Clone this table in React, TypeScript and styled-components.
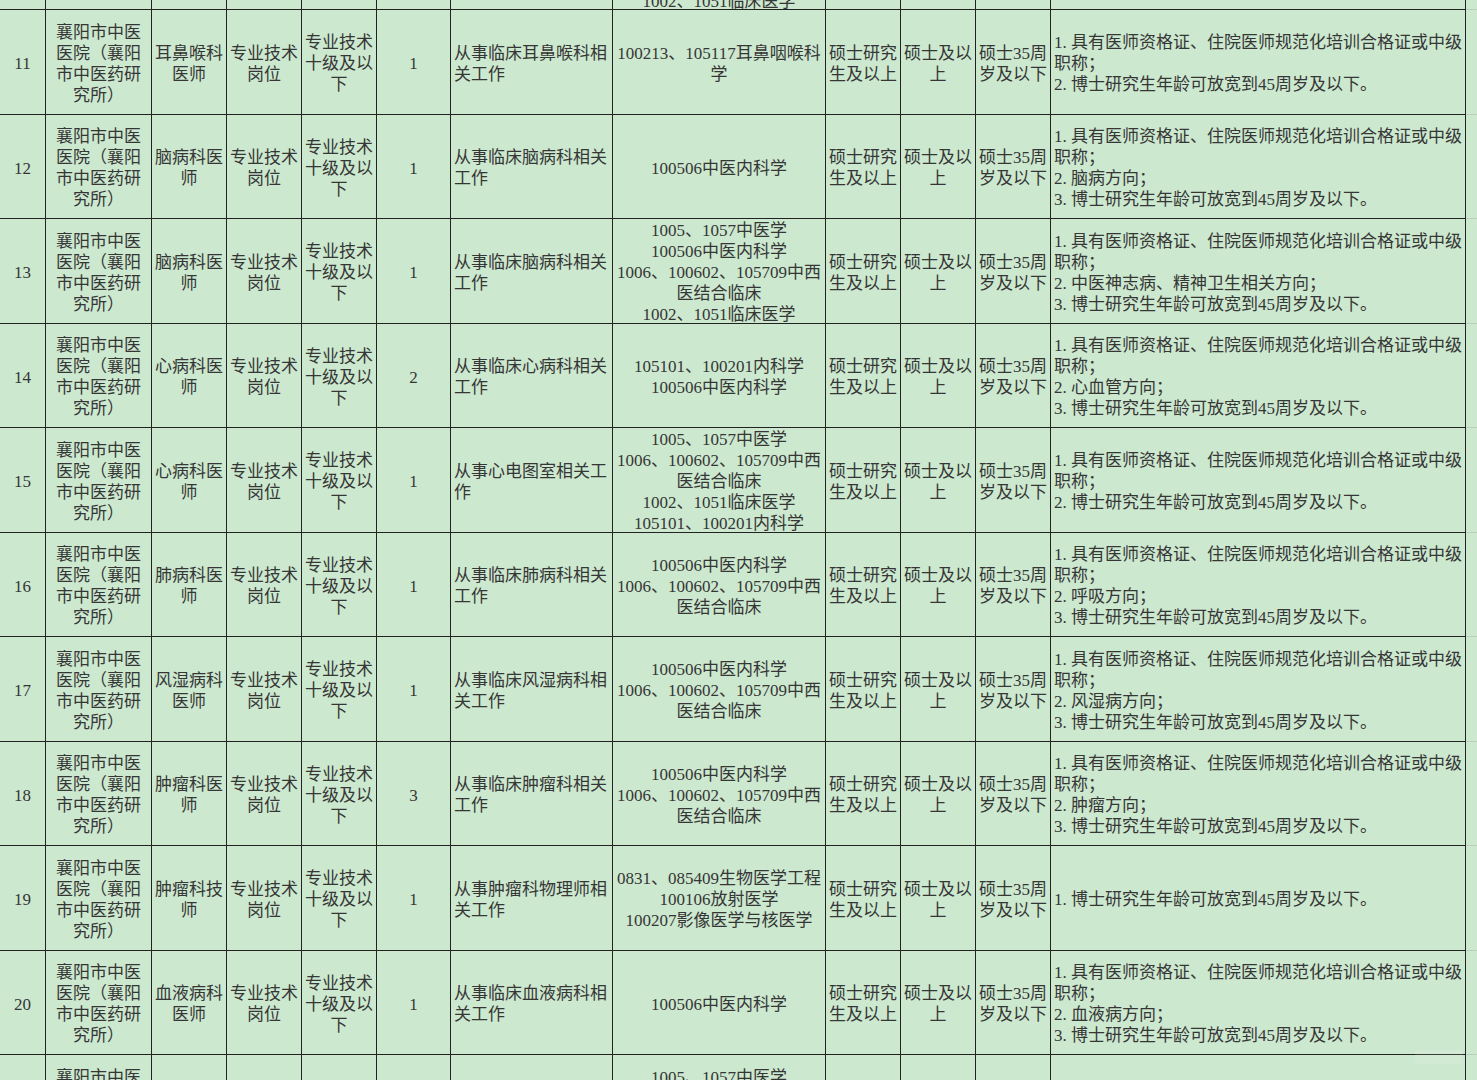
import React from "react";
import styled, { createGlobalStyle } from "styled-components";

const GlobalStyle = createGlobalStyle`
  html, body {
    margin: 0;
    padding: 0;
    background: #cce8cf;
  }
  body {
    font-family: "Liberation Serif", "Noto Sans CJK SC", serif;
    color: #363636;
  }
`;

const COLS = "46px 106px 75px 75px 75px 74px 162px 213px 75px 75px 75px 415px 1fr";

const Viewport = styled.div`
  position: relative;
  width: 1477px;
  height: 1080px;
  overflow: hidden;
  background: #cce8cf;
`;

const Sheet = styled.div`
  margin-top: -94.5px;
  display: flex;
  flex-direction: column;
`;

const Row = styled.div`
  display: grid;
  grid-template-columns: ${COLS};
  height: 104.5px;
`;

const Cell = styled.div<{ $align?: "left" | "center" }>`
  box-sizing: border-box;
  border-right: 1px solid #222;
  border-bottom: 1px solid #222;
  display: flex;
  flex-direction: column;
  justify-content: center;
  align-items: ${(p) => (p.$align === "left" ? "flex-start" : "center")};
  padding: ${(p) => (p.$align === "left" ? "4px 2px 0 3px" : "4px 1px 0")};
  overflow: hidden;
  font-size: 17px;
  line-height: 21px;
  color: #363636;
`;

const Filler = styled.div`
  box-sizing: border-box;
  border-bottom: 1px solid #b9cfbd;
`;

const Line = styled.span`
  display: block;
  white-space: nowrap;
`;

const Watermark = styled.div`
  position: absolute;
  right: 14px;
  bottom: 16px;
  width: 48px;
  height: 14px;
  border-radius: 4px;
  background: rgba(255, 255, 255, 0.12);
`;

type RowData = {
  no: string;
  unit: string[];
  post: string[];
  type: string[];
  level: string[];
  count: string;
  duty: string[];
  major: string[];
  edu: string[];
  degree: string[];
  age: string[];
  other: string[];
};

const UNIT = ["襄阳市中医", "医院（襄阳", "市中医药研", "究所）"];
const TYPE = ["专业技术", "岗位"];
const LEVEL = ["专业技术", "十级及以", "下"];
const EDU = ["硕士研究", "生及以上"];
const DEGREE = ["硕士及以", "上"];
const AGE = ["硕士35周", "岁及以下"];
const REQ1 = "1. 具有医师资格证、住院医师规范化培训合格证或中级";
const REQ1B = "职称；";
const MAJOR_ZX = ["100506中医内科学", "1006、100602、105709中西", "医结合临床"];

const base = {
  unit: UNIT,
  type: TYPE,
  level: LEVEL,
  edu: EDU,
  degree: DEGREE,
  age: AGE,
};

const rows: RowData[] = [
  {
    ...base,
    no: "10",
    post: ["脑病科医", "师"],
    count: "1",
    duty: ["从事临床脑病科相关", "工作"],
    major: ["1005、1057中医学", "100506中医内科学", "1006、100602、105709中西", "医结合临床", "1002、1051临床医学"],
    other: [REQ1, REQ1B, "2. 博士研究生年龄可放宽到45周岁及以下。"],
  },
  {
    ...base,
    no: "11",
    post: ["耳鼻喉科", "医师"],
    count: "1",
    duty: ["从事临床耳鼻喉科相", "关工作"],
    major: ["100213、105117耳鼻咽喉科", "学"],
    other: [REQ1, REQ1B, "2. 博士研究生年龄可放宽到45周岁及以下。"],
  },
  {
    ...base,
    no: "12",
    post: ["脑病科医", "师"],
    count: "1",
    duty: ["从事临床脑病科相关", "工作"],
    major: ["100506中医内科学"],
    other: [REQ1, REQ1B, "2. 脑病方向；", "3. 博士研究生年龄可放宽到45周岁及以下。"],
  },
  {
    ...base,
    no: "13",
    post: ["脑病科医", "师"],
    count: "1",
    duty: ["从事临床脑病科相关", "工作"],
    major: ["1005、1057中医学", "100506中医内科学", "1006、100602、105709中西", "医结合临床", "1002、1051临床医学"],
    other: [REQ1, REQ1B, "2. 中医神志病、精神卫生相关方向；", "3. 博士研究生年龄可放宽到45周岁及以下。"],
  },
  {
    ...base,
    no: "14",
    post: ["心病科医", "师"],
    count: "2",
    duty: ["从事临床心病科相关", "工作"],
    major: ["105101、100201内科学", "100506中医内科学"],
    other: [REQ1, REQ1B, "2. 心血管方向；", "3. 博士研究生年龄可放宽到45周岁及以下。"],
  },
  {
    ...base,
    no: "15",
    post: ["心病科医", "师"],
    count: "1",
    duty: ["从事心电图室相关工", "作"],
    major: ["1005、1057中医学", "1006、100602、105709中西", "医结合临床", "1002、1051临床医学", "105101、100201内科学"],
    other: [REQ1, REQ1B, "2. 博士研究生年龄可放宽到45周岁及以下。"],
  },
  {
    ...base,
    no: "16",
    post: ["肺病科医", "师"],
    count: "1",
    duty: ["从事临床肺病科相关", "工作"],
    major: MAJOR_ZX,
    other: [REQ1, REQ1B, "2. 呼吸方向；", "3. 博士研究生年龄可放宽到45周岁及以下。"],
  },
  {
    ...base,
    no: "17",
    post: ["风湿病科", "医师"],
    count: "1",
    duty: ["从事临床风湿病科相", "关工作"],
    major: MAJOR_ZX,
    other: [REQ1, REQ1B, "2. 风湿病方向；", "3. 博士研究生年龄可放宽到45周岁及以下。"],
  },
  {
    ...base,
    no: "18",
    post: ["肿瘤科医", "师"],
    count: "3",
    duty: ["从事临床肿瘤科相关", "工作"],
    major: MAJOR_ZX,
    other: [REQ1, REQ1B, "2. 肿瘤方向；", "3. 博士研究生年龄可放宽到45周岁及以下。"],
  },
  {
    ...base,
    no: "19",
    post: ["肿瘤科技", "师"],
    count: "1",
    duty: ["从事肿瘤科物理师相", "关工作"],
    major: ["0831、085409生物医学工程", "100106放射医学", "100207影像医学与核医学"],
    other: ["1. 博士研究生年龄可放宽到45周岁及以下。"],
  },
  {
    ...base,
    no: "20",
    post: ["血液病科", "医师"],
    count: "1",
    duty: ["从事临床血液病科相", "关工作"],
    major: ["100506中医内科学"],
    other: [REQ1, REQ1B, "2. 血液病方向；", "3. 博士研究生年龄可放宽到45周岁及以下。"],
  },
  {
    ...base,
    no: "21",
    post: ["内分泌科", "医师"],
    type: TYPE,
    level: ["专业技术", "十级及以下"],
    count: "1",
    duty: ["从事临床内分泌科相", "关工作"],
    major: ["1005、1057中医学", "1006、100602、105709中西", "医结合临床", "1002、1051临床医学"],
    other: [REQ1, REQ1B],
  },
];

const Lines: React.FC<{ lines: string[] }> = ({ lines }) => (
  <>
    {lines.map((l, i) => (
      <Line key={i}>{l}</Line>
    ))}
  </>
);

export default function App() {
  return (
    <>
      <GlobalStyle />
      <Viewport>
        <Sheet>
          {rows.map((r) => (
            <Row key={r.no}>
              <Cell>
                <Line>{r.no}</Line>
              </Cell>
              <Cell>
                <Lines lines={r.unit} />
              </Cell>
              <Cell>
                <Lines lines={r.post} />
              </Cell>
              <Cell>
                <Lines lines={r.type} />
              </Cell>
              <Cell>
                <Lines lines={r.level} />
              </Cell>
              <Cell>
                <Line>{r.count}</Line>
              </Cell>
              <Cell $align="left">
                <Lines lines={r.duty} />
              </Cell>
              <Cell>
                <Lines lines={r.major} />
              </Cell>
              <Cell>
                <Lines lines={r.edu} />
              </Cell>
              <Cell>
                <Lines lines={r.degree} />
              </Cell>
              <Cell>
                <Lines lines={r.age} />
              </Cell>
              <Cell $align="left">
                <Lines lines={r.other} />
              </Cell>
              <Filler />
            </Row>
          ))}
        </Sheet>
        <Watermark />
      </Viewport>
    </>
  );
}
